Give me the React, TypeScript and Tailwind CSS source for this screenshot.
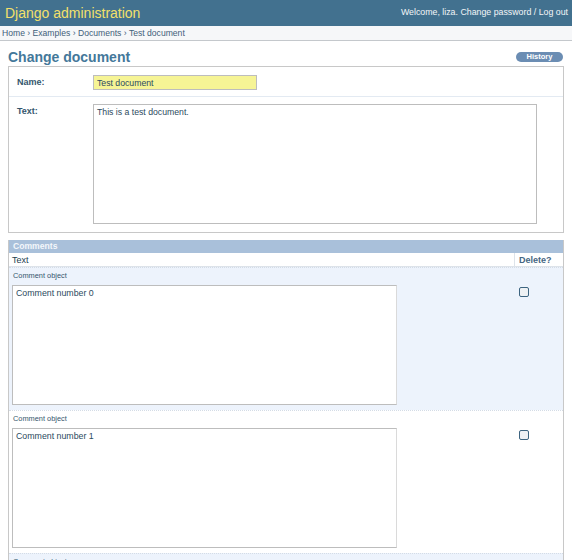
import React from 'react';

const comments = ['Comment number 0', 'Comment number 1', 'Comment number 2'];

export default function App() {
  return (
    <div className="min-h-[560px] overflow-hidden bg-white font-['Liberation_Sans',Arial,sans-serif] text-[#2b4a60]">
      <div className="flex h-[26px] items-center justify-between bg-[#42718f] pl-[5px] pr-[4px]">
        <h1 className="text-[14px] leading-none text-[#f3e06a]">Django administration</h1>
        <div className="text-[8.8px] text-[#f4f6f8]">Welcome, liza. Change password / Log out</div>
      </div>
      <div className="flex h-[15px] items-center border-b border-[#c4c8cc] bg-[#f6f7f9] px-[2px] text-[8.6px] text-[#3f6079]">
        Home › Examples › Documents › Test document
      </div>

      <div className="px-[8px]">
        <div className="mt-[7px] flex h-[18px] items-center justify-between">
          <h2 className="text-[14px] font-bold leading-none text-[#44789a]">Change document</h2>
          <span className="mr-[1px] flex h-[10px] w-[47px] items-center justify-center rounded-full bg-[#6b8db3] text-[7.5px] font-bold leading-none text-white">
            History
          </span>
        </div>

        <div className="border border-[#c8c8c8]">
          <div className="flex h-[30px] border-b border-[#e3eaf2] pl-[8px] pt-[8px]">
            <label className="w-[76px] pt-[1px] text-[9px] font-bold leading-[12px] text-[#35566d]">Name:</label>
            <input
              defaultValue="Test document"
              className="h-[15px] w-[164px] border border-[#bdbdbd] bg-[#f6f495] px-[3px] text-[8.7px] text-[#2b4a60] outline-none"
            />
          </div>
          <div className="flex pb-[8px] pl-[8px] pt-[7px]">
            <label className="w-[76px] pt-[1px] text-[9px] font-bold leading-[12px] text-[#35566d]">Text:</label>
            <textarea
              defaultValue="This is a test document."
              className="h-[120px] w-[444px] resize-none border border-[#bdbdbd] bg-white px-[3px] py-[1px] text-[8.7px] leading-[12px] text-[#2b4a60] outline-none"
            />
          </div>
        </div>

        <div className="mt-[7px] border-x border-[#c8c8c8]">
          <div className="flex h-[13px] items-center bg-[#a9c0da] px-[4px] text-[8.6px] font-bold leading-none text-[#f4f7fb]">
            Comments
          </div>
          <div className="flex h-[14px] border-b border-[#dde3ea] text-[9px] leading-[14px]">
            <div className="flex-1 pl-[3px] text-[#24404f]">Text</div>
            <div className="w-[49px] border-l border-[#dde3ea] pl-[4px] font-bold text-[#456683]">Delete?</div>
          </div>
          {comments.map((c, i) => (
            <div
              key={c}
              className={`flex border-t border-dotted border-[#d4dce6] first:border-t-0 ${
                i % 2 === 0 ? 'bg-[#edf3fc]' : 'bg-white'
              }`}
            >
              <div className="flex-1 pb-[5px] pl-[3px] pt-[3px]">
                <div className="mb-[4px] h-[10px] pl-[1px] text-[7.4px] leading-[10px] text-[#35566d]">Comment object</div>
                <textarea
                  defaultValue={c}
                  className="block h-[120px] w-[385px] resize-none border border-[#bdbdbd] border-r-[#dadada] bg-white px-[3px] py-[1px] text-[8.8px] leading-[12px] text-[#2b4a60] outline-none"
                />
              </div>
              <div className="w-[49px] pl-[5px] pt-[19px]">
                <span className="block h-[10px] w-[10px] rounded-[2px] border border-[#3d6480] bg-[#eef1f4]" />
              </div>
            </div>
          ))}
        </div>
      </div>
    </div>
  );
}
